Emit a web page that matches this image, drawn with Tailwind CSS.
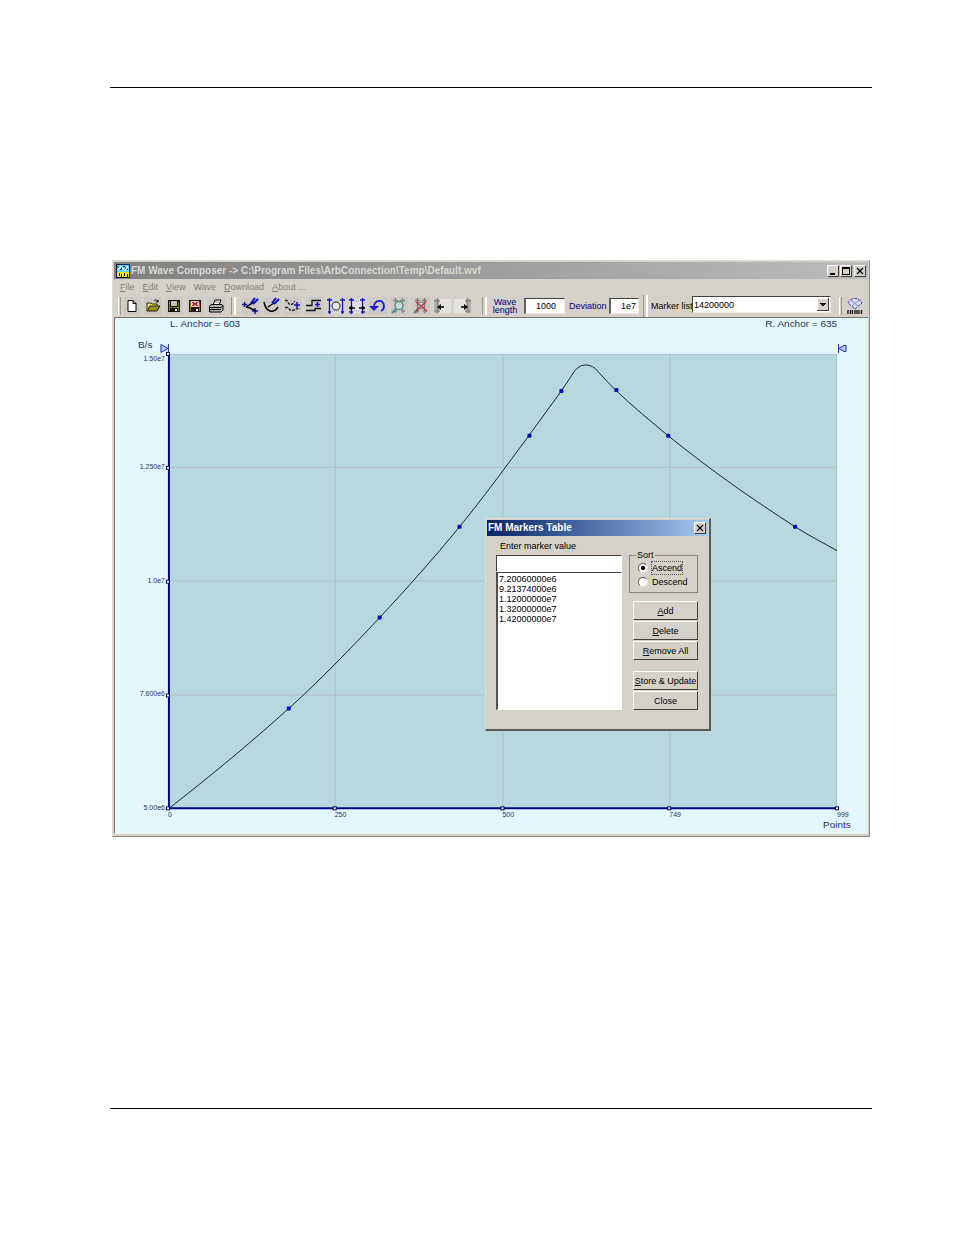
<!DOCTYPE html>
<html lang="en">
<head>
    <meta charset="UTF-8" />
    <meta name="viewport" content="width=device-width, initial-scale=1.0" />
    <title>FM Wave Composer</title>
    <script src="https://cdn.jsdelivr.net/npm/@tailwindcss/browser@4"></script>
</head>

<body class="bg-white text-black font-['Liberation_Sans',Arial,sans-serif] text-[9px] leading-3">
<div class="pl-[110px] pr-[82px] pt-[87px]">
    <hr class="border-t border-black" />

    <!-- Main window -->
    <main class="relative mt-[172px] mb-[271px] mx-[2px] bg-[#d5d0c8] border border-t-[#dedad2] border-l-[#dedad2] border-r-[#8f8b85] border-b-[#8f8b85] p-px">
        <!-- Title bar -->
        <header class="flex items-center h-[17px] px-[2px] bg-linear-to-r from-[#808080] to-[#bcbcbc] text-[#dcd8d0]">
            <svg class="w-[14px] h-[14px] mr-px" viewBox="0 0 14 14" shape-rendering="crispEdges">
                <rect width="14" height="14" fill="#101840" />
                <rect x="1" y="1" width="12" height="7" fill="#58d8f0" />
                <path d="M1 2l4 4 3-4 4 4" fill="none" stroke="#1038c0" />
                <path d="M2 6l3-4 4 5 3-5" fill="none" stroke="#fff" />
                <rect x="1" y="8" width="12" height="5" fill="#f0e020" />
                <path d="M3 9v3M5 10v3M8 9v3M11 10v3" stroke="#101010" />
            </svg>
            <h1 class="grow font-bold text-[10px] whitespace-nowrap">FM Wave Composer -&gt; C:\Program Files\ArbConnection\Temp\Default.wvf</h1>
            <div class="flex gap-px">
                <button aria-label="Minimize" class="w-3 h-3 bg-[#d5d0c8] border border-t-white border-l-white border-r-[#404040] border-b-[#404040]">
                    <svg class="w-full h-full" viewBox="0 0 10 10" shape-rendering="crispEdges"><rect x="2" y="7" width="5" height="2" /></svg>
                </button>
                <button aria-label="Maximize" class="w-3 h-3 bg-[#d5d0c8] border border-t-white border-l-white border-r-[#404040] border-b-[#404040]">
                    <svg class="w-full h-full" viewBox="0 0 10 10" shape-rendering="crispEdges"><path d="M1 1h8v8h-8zM2 3v5h6v-5z" fill-rule="evenodd" /></svg>
                </button>
                <button aria-label="Close" class="w-3 h-3 ml-px bg-[#d5d0c8] border border-t-white border-l-white border-r-[#404040] border-b-[#404040]">
                    <svg class="w-full h-full" viewBox="0 0 10 10"><path d="M2 2l6 6M8 2l-6 6" stroke="#000" stroke-width="1.3" /></svg>
                </button>
            </div>
        </header>

        <!-- Menu -->
        <nav class="flex items-center gap-[8px] h-[15px] pl-[6px] text-[#85817b]">
            <a href="#"><u>F</u>ile</a>
            <a href="#"><u>E</u>dit</a>
            <a href="#"><u>V</u>iew</a>
            <a href="#">Wave</a>
            <a href="#"><u>D</u>ownload</a>
            <a href="#"><u>A</u>bout ...</a>
        </nav>

        <!-- Toolbar -->
        <div class="flex items-center h-6 pl-[4px] border-b border-[#77736d] whitespace-nowrap">
            <span class="w-[3px] h-[18px] border-l border-white border-r border-r-[#9a968f]"></span>
            <div class="flex w-[106px]">
                <button aria-label="New" class="flex-1 flex justify-center">
                    <svg class="w-[18px] h-[18px] bg-[#cdc9c5]" viewBox="-1 -1 18 18"><path d="M4 2.500h5l3 3v8h-8z" fill="#fff" stroke="#000" /><path d="M9 2.500v3h3" fill="none" stroke="#000" /></svg>
                </button>
                <button aria-label="Open" class="flex-1 flex justify-center">
                    <svg class="w-[18px] h-[18px] bg-[#cdc9c5]" viewBox="-1 -1 18 18"><path d="M2 13V5h4l1 1h5v2" fill="#e8e070" stroke="#303000" /><path d="M2 13l3-5h10l-3 5z" fill="#90901c" stroke="#202000" /><path d="M9 3c2-2 3-1 4 1m0-2v2h-2" fill="none" stroke="#000" /></svg>
                </button>
                <button aria-label="Save" class="flex-1 flex justify-center">
                    <svg class="w-[18px] h-[18px] bg-[#cdc9c5]" viewBox="-1 -1 18 18" shape-rendering="crispEdges"><rect x="2" y="2" width="12" height="12" fill="#101008" /><rect x="3" y="3" width="1" height="10" fill="#808020" /><rect x="12" y="4" width="1" height="9" fill="#808020" /><rect x="5" y="3" width="6" height="5" fill="#c0c4b8" /><rect x="4" y="9" width="8" height="1" fill="#808020" /><rect x="9" y="11" width="2" height="2" fill="#fff" /></svg>
                </button>
                <button aria-label="Save as" class="flex-1 flex justify-center">
                    <svg class="w-[18px] h-[18px] bg-[#cdc9c5]" viewBox="-1 -1 18 18" shape-rendering="crispEdges"><rect x="2" y="2" width="12" height="12" fill="#281010" /><rect x="3" y="3" width="1" height="10" fill="#808020" /><rect x="12" y="4" width="1" height="9" fill="#808020" /><rect x="4" y="3" width="8" height="6" fill="#f0c0c0" /><path d="M5 4h2v1h2V4h2v1h-1v2h1v1H9V7H7v1H5V7h1V5H5z" fill="#c02030" /><rect x="9" y="11" width="2" height="2" fill="#fff" /></svg>
                </button>
                <button aria-label="Print" class="flex-1 flex justify-center">
                    <svg class="w-[18px] h-[18px] bg-[#cdc9c5]" viewBox="-1 -1 18 18"><path d="M5 7l2-5h6l-2 5" fill="#fff" stroke="#000" /><path d="M1.500 8l2-1.500h10.500l1 1.500v4l-2 2h-11.500z" fill="#b0b0a8" stroke="#000" /><path d="M2 9.500h11M2 11.500h11M13 9.500l2-2" stroke="#000" /><path d="M7 4h4" stroke="#888" /></svg>
                </button>
            </div>
            <span class="w-[5px] h-[18px] mx-[4px] border-l border-[#9a968f] border-r-2 border-r-white"></span>
            <div class="flex w-[234px]">
                <button aria-label="Insert marker line" class="flex-1 flex justify-center">
                    <svg class="w-[18px] h-[18px] bg-[#cdc9c5]" viewBox="0 -1 18 18"><path d="M0 6.500h5M2.500 4v5M10 13h6M13 10v6" stroke="#1010c0" stroke-width="1.500" /><path d="M4 9l8-5M4 9l4 1 6 3" fill="none" stroke="#000" stroke-width="1.500" /><path d="M9 5l4-5M11 6l5-5" stroke="#1010c0" stroke-width="2" /></svg>
                </button>
                <button aria-label="Free curve" class="flex-1 flex justify-center">
                    <svg class="w-[18px] h-[18px] bg-[#cdc9c5]" viewBox="0 -1 18 18"><path d="M1 4c1 5 3 8 6 9c3 1 6-1 8-4M5 9l6-4" fill="none" stroke="#000" stroke-width="1.500" /><path d="M9 5l4-5M11 6l5-5" stroke="#1010c0" stroke-width="2" /></svg>
                </button>
                <button aria-label="Smooth" class="flex-1 flex justify-center">
                    <svg class="w-[18px] h-[18px] bg-[#cdc9c5]" viewBox="0 -1 18 18"><path d="M1 2.500h2c1 1 1 4 4 4s2-3 4-3M1 9.500h2c2 0 2 3 5 3s3-2 8-2" fill="none" stroke="#222" stroke-width="1.300" stroke-dasharray="3 1" /><path d="M10 7h6M13 4v6" stroke="#1010c0" stroke-width="1.500" /></svg>
                </button>
                <button aria-label="Step" class="flex-1 flex justify-center">
                    <svg class="w-[18px] h-[18px] bg-[#cdc9c5]" viewBox="0 -1 18 18"><path d="M1 7.500h6v-5h9M1 12.500h9v-2h6" fill="none" stroke="#111" stroke-width="1.300" /><path d="M10 6.500h5M12.500 4v5" stroke="#1010c0" stroke-width="1.500" /></svg>
                </button>
                <button aria-label="Zoom to anchors" class="flex-1 flex justify-center">
                    <svg class="w-[18px] h-[18px]" viewBox="0 -1 18 18"><rect x="3" y="1" width="12" height="14" fill="#e2e0e6" /><path d="M2.500 0v16M15.500 0v16M0 2h5M13 2h5M1 14h3M14 14h3" stroke="#1010c0" stroke-width="1.300" /><circle cx="9" cy="8" r="4" fill="#e6eae8" stroke="#555" stroke-width="1.300" /><path d="M3 8h2M13 8h2M5 3h8M5 13h8" stroke="#888" stroke-dasharray="1 1" /></svg>
                </button>
                <button aria-label="Fit anchors" class="flex-1 flex justify-center">
                    <svg class="w-[18px] h-[18px]" viewBox="0 -1 18 18"><rect x="3" y="1" width="12" height="14" fill="#e2e0e6" /><path d="M3.500 0v16M14.500 0v16M1 2h5M12 2h5M1 14h4M13 14h4" stroke="#1010c0" stroke-width="1.300" /><path d="M6 3h6M6 13h6" stroke="#888" stroke-dasharray="1 1" /><path d="M1 10h6M11 10h6M4 8l-2 2 2 2M14 8l2 2-2 2" fill="none" stroke="#000" stroke-width="1.300" /></svg>
                </button>
                <button aria-label="Undo" class="flex-1 flex justify-center">
                    <svg class="w-[18px] h-[18px] bg-[#cdc9c5]" viewBox="0 -1 18 18"><path d="M5 9c0-8 10-8 10-1c0 3-1 4-3 5" fill="none" stroke="#1818d8" stroke-width="1.800" /><path d="M0 8h10l-5 5z" fill="#1818d8" /></svg>
                </button>
                <button aria-label="View marker" class="flex-1 flex justify-center">
                    <svg class="w-[18px] h-[18px] bg-[#cdc9c5]" viewBox="0 -1 18 18"><path d="M5.500 0v15M12.500 0v15M3 2.500h5M10 2.500h5M3 13h4M11 13h4" stroke="#8a8880" stroke-width="1.300" /><circle cx="9" cy="7.500" r="4" fill="#c8d8d4" stroke="#50908c" stroke-width="1.300" /><path d="M6 11l-4 4" stroke="#50908c" stroke-width="2" /></svg>
                </button>
                <button aria-label="Clear marker" class="flex-1 flex justify-center">
                    <svg class="w-[18px] h-[18px] bg-[#cdc9c5]" viewBox="0 -1 18 18"><path d="M5.500 0v15M12.500 0v15M3 2.500h5M10 2.500h5M3 13h4M11 13h4" stroke="#807e78" stroke-width="1.300" /><circle cx="9" cy="7.500" r="3.500" fill="none" stroke="#6a8884" /><path d="M6 11l-4 4" stroke="#50908c" stroke-width="2" /><path d="M4 4l11 9M14 4l-10 9" stroke="#c83838" stroke-width="1.300" /></svg>
                </button>
                <button aria-label="Scroll left" class="flex-1 flex justify-center">
                    <svg class="w-[18px] h-[18px]" viewBox="0 -1 18 18"><rect x="6" y="1" width="12" height="14" fill="#e4e2de" /><rect x="1" y="1" width="5" height="14" fill="#b4b2ae" /><path d="M4.500 0v15M1 3h6M2 13h5" stroke="#8a8880" stroke-width="1.500" /><path d="M6 9h5" stroke="#000" stroke-width="1.500" /><path d="M4 9l4-3v6z" /></svg>
                </button>
                <button aria-label="Scroll right" class="flex-1 flex justify-center">
                    <svg class="w-[18px] h-[18px]" viewBox="0 -1 18 18"><rect y="1" width="12" height="14" fill="#e4e2de" /><rect x="12" y="1" width="5" height="14" fill="#b4b2ae" /><path d="M13.500 0v15M11 3h6M11 13h5" stroke="#8a8880" stroke-width="1.500" /><path d="M7 9h5" stroke="#000" stroke-width="1.500" /><path d="M14 9l-4-3v6z" /></svg>
                </button>
            </div>
            <span class="w-[5px] h-[18px] ml-[8px] border-l border-[#9a968f] border-r-2 border-r-white"></span>
            <label for="wave-length" class="w-8 ml-[2px] mr-[3px] text-center leading-[8px] text-[#000080] whitespace-normal">Wave length</label>
            <input id="wave-length" type="text" value="1000" class="w-[41px] h-4 px-2 bg-white text-right border border-l-2 border-t-[#404040] border-l-[#606060] border-r-[#eceae4] border-b-[#eceae4]" />
            <label for="deviation" class="w-9 mx-[4px] text-[#000080]">Deviation</label>
            <input id="deviation" type="text" value="1e7" class="w-[30px] h-4 pr-[2px] bg-white text-right border border-l-2 border-t-[#404040] border-l-[#606060] border-r-[#eceae4] border-b-[#eceae4]" />
            <span class="w-[5px] h-[22px] ml-[4px] mr-[3px] border-l border-[#9a968f] border-r-2 border-r-white"></span>
            <label for="marker-list" class="w-[41px]">Marker list</label>
            <div class="relative grow h-[17px] mr-[8px] mb-[2px]">
                <select id="marker-list" class="appearance-none block w-full h-full pl-px bg-white border border-t-[#404040] border-l-[#404040] border-r-[#eceae4] border-b-[#eceae4]">
                    <option>14200000</option>
                </select>
                <svg class="absolute right-[2px] top-[2px] w-3 h-[13px] pointer-events-none" viewBox="0 0 12 13" shape-rendering="crispEdges">
                    <rect width="12" height="13" fill="#404040" /><rect width="11" height="12" fill="#fff" /><rect x="1" y="1" width="10" height="11" fill="#d5d0c8" />
                    <path d="M3 5h6v1h-1v1h-1v1h-2v-1h-1v-1h-1z" />
                </svg>
            </div>
            <span class="w-[3px] h-[18px] border-l border-white border-r border-r-[#9a968f]"></span>
            <button aria-label="Download waveform" class="mx-[4px]">
                <svg class="w-[18px] h-[18px]" viewBox="0 0 18 18"><path d="M2 6c3-6 11-6 14 0l-7 6z" fill="#d8dcf4" stroke="#3838a8" stroke-dasharray="3 1" /><path d="M5 3l7 6M13 3l-7 6" stroke="#8090cc" /><path d="M2 13v4M4.500 13v4M6.500 13v4M9 13v4M11 13v4M13 13v4M15.500 13v4" stroke="#111" stroke-width="1.300" /></svg>
            </button>
        </div>

        <!-- Waveform chart -->
        <div class="border-l border-l-[#77736d] border-b border-b-[#f4f2ee] border-r-2 border-r-[#eceae4] mb-px">
            <svg class="block w-full h-auto bg-[#e4f7ff]" viewBox="0 0 752 516" fill="#18385a">
                <rect x="54" y="36" width="669" height="455" fill="#b7d8df" />
                <path d="M220.500 36v455M388.500 36v455M555.500 36v455M54 149.500h669M54 263.500h669M54 377.500h669M54 36.500h669M722.500 36v455" stroke="#b5bfc2" fill="none" />
                <path d="M54 491C94 460 134 427 174 391C204 364 235 332 265 300C292 271 318 242 345 209C368 181 392 148 415 117C426 102 436 88 447 73L457 58Q463 47 471 47Q479 47 484 54Q492 63 501 72C519 89 536 103 554 118C596 152 639 182 681 209C695 218 709 225 723 233" fill="none" stroke="#182428" />
                <g fill="#0808b8">
                    <rect x="172" y="389" width="4" height="4" rx="1" />
                    <rect x="263" y="298" width="4" height="4" rx="1" />
                    <rect x="343" y="207" width="4" height="4" rx="1" />
                    <rect x="413" y="116" width="4" height="4" rx="1" />
                    <rect x="445" y="71" width="4" height="4" rx="1" />
                    <rect x="500" y="70" width="4" height="4" rx="1" />
                    <rect x="552" y="116" width="4" height="4" rx="1" />
                    <rect x="679" y="207" width="4" height="4" rx="1" />
                </g>
                <!-- Axes with handles -->
                <path d="M54 36v455h669" fill="none" stroke="#000088" stroke-width="2" />
                <g fill="#fff" stroke="#000060">
                    <rect x="51.500" y="34.500" width="3" height="3" />
                    <rect x="51.500" y="148.500" width="3" height="3" />
                    <rect x="51.500" y="262.500" width="3" height="3" />
                    <rect x="51.500" y="376.500" width="3" height="3" />
                    <rect x="51.500" y="489.500" width="3" height="3" />
                    <rect x="218.500" y="489.500" width="3" height="3" />
                    <rect x="386.500" y="489.500" width="3" height="3" />
                    <rect x="553.500" y="489.500" width="3" height="3" />
                    <rect x="721.500" y="489.500" width="3" height="3" />
                </g>
                <!-- Anchors -->
                <path d="M46 26.500l7 4-7 4zM53.500 26v9" fill="#b8ccf4" stroke="#1c2c98" />
                <path d="M732 27.500v6h-2l-5-3 5-3zM724.500 26v9" fill="#b8ccf4" stroke="#1c2c98" />
                <g font-size="10">
                    <text x="55" y="9">L. Anchor = 603</text>
                    <text x="723" y="9" text-anchor="end">R. Anchor = 635</text>
                    <text x="23" y="30">B/s</text>
                    <text x="709" y="511">Points</text>
                </g>
                <g font-size="7" text-anchor="end">
                    <text x="50" y="43">1.50e7</text>
                    <text x="50" y="151">1.250e7</text>
                    <text x="50" y="265">1.0e7</text>
                    <text x="50" y="379">7.600e6</text>
                    <text x="50" y="493">5.00e6</text>
                </g>
                <g font-size="7">
                    <text x="53" y="500">0</text>
                    <text x="220" y="500">250</text>
                    <text x="388" y="500">500</text>
                    <text x="555" y="500">749</text>
                    <text x="723" y="500">999</text>
                </g>
            </svg>
        </div>

        <!-- Markers dialog -->
        <section role="dialog" aria-labelledby="markers-title" class="absolute left-[372px] top-[257px] w-[226px] bg-[#d5d0c8] border border-t-[#dedad2] border-l-[#dedad2] border-r-2 border-b-2 border-r-[#5c5a56] border-b-[#5c5a56] p-px pb-[19px]">
            <header class="flex items-center h-4 pl-px pr-[2px] bg-linear-to-r from-[#082468] to-[#a6caf0] text-white">
                <h2 id="markers-title" class="grow font-bold text-[10px]">FM Markers Table</h2>
                <button aria-label="Close dialog" class="w-3 h-3 bg-[#d5d0c8] border border-t-white border-l-white border-r-[#404040] border-b-[#404040]">
                    <svg class="w-full h-full" viewBox="0 0 10 10"><path d="M2 2l6 6M8 2l-6 6" stroke="#000" stroke-width="1.3" /></svg>
                </button>
            </header>
            <div class="flex gap-[7px] pt-1 pl-[9px]">
                <div class="flex flex-col w-[126px]">
                    <label for="marker-value" class="h-[15px] pl-1">Enter marker value</label>
                    <input id="marker-value" type="text" class="h-[17px] px-1 bg-white border border-t-[#404040] border-l-[#404040] border-r-white border-b-white" />
                    <select size="5" aria-label="Markers" class="h-[138px] py-px bg-white overflow-hidden border border-l-2 border-t-[#404040] border-l-[#505050] border-r-white border-b-white">
                        <option class="min-h-[10px] h-[10px] p-0 pl-px leading-[10px]">7.20060000e6</option>
                        <option class="min-h-[10px] h-[10px] p-0 pl-px leading-[10px]">9.21374000e6</option>
                        <option class="min-h-[10px] h-[10px] p-0 pl-px leading-[10px]">1.12000000e7</option>
                        <option class="min-h-[10px] h-[10px] p-0 pl-px leading-[10px]">1.32000000e7</option>
                        <option class="min-h-[10px] h-[10px] p-0 pl-px leading-[10px]">1.42000000e7</option>
                    </select>
                </div>
                <div class="flex flex-col w-[69px] pt-[9px]">
                    <fieldset class="h-11 px-2 mb-2 border border-[#8a867f]">
                        <legend class="px-px -ml-[2px]">Sort</legend>
                        <label class="flex items-center gap-[4px] h-[13px]">
                            <input type="radio" name="sort" checked class="appearance-none w-[10px] h-[10px] rounded-full bg-white border border-t-[#606060] border-l-[#606060] border-[#e8e6e0] bg-radial from-black from-30% to-white to-40%" />
                            <span class="outline outline-dotted outline-[#555]">Ascend</span>
                        </label>
                        <label class="flex items-center gap-[4px] h-[15px]">
                            <input type="radio" name="sort" class="appearance-none w-[10px] h-[10px] rounded-full bg-white border border-t-[#606060] border-l-[#606060] border-[#e8e6e0]" />
                            <span>Descend</span>
                        </label>
                    </fieldset>
                    <div class="flex flex-col gap-px pl-1 whitespace-nowrap">
                        <button class="h-[19px] border border-t-white border-l-white border-r-[#404040] border-b-[#404040]"><u>A</u>dd</button>
                        <button class="h-[19px] border border-t-white border-l-white border-r-[#404040] border-b-[#404040]"><u>D</u>elete</button>
                        <button class="h-[19px] border border-t-white border-l-white border-r-[#404040] border-b-[#404040]"><u>R</u>emove All</button>
                        <button class="h-[19px] mt-[10px] border border-t-white border-l-white border-r-[#404040] border-b-[#404040]"><u>S</u>tore &amp; Update</button>
                        <button class="h-[19px] border border-t-white border-l-white border-r-[#404040] border-b-[#404040]">Close</button>
                    </div>
                </div>
            </div>
        </section>
    </main>

    <hr class="border-t border-black" />
</div>
</body>
</html>
